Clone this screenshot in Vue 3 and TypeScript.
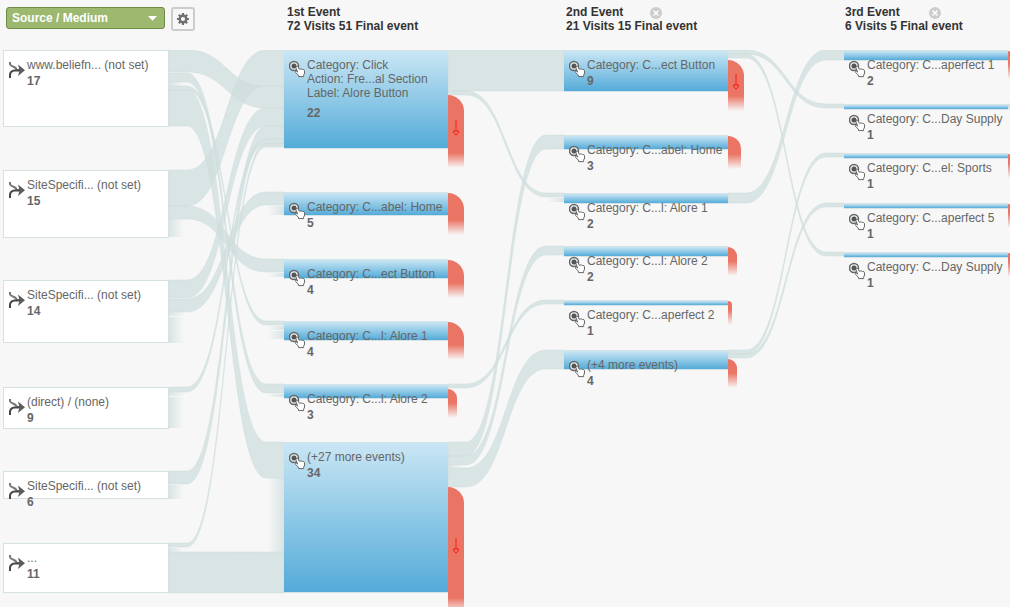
<script setup lang="ts">
import { ref } from 'vue'

interface FlowNode {
  y: number
  h: number
  lines: string[]
  visits: number
}
interface Stage {
  title: string
  summary: string
  closable: boolean
}
interface Exit {
  y: number
  h: number
  w: number
  arrow?: number
}

const PITCH = 280
const FIRST_X = 284
const NODE_W = 164
const LEAD = 18

const dimension = ref('Source / Medium')
const dimensions = ['Source / Medium', 'Landing Page', 'Country']

const stages: Stage[] = [
  { title: '1st Event', summary: '72 Visits 51 Final event', closable: false },
  { title: '2nd Event', summary: '21 Visits 15 Final event', closable: true },
  { title: '3rd Event', summary: '6 Visits 5 Final event', closable: true },
]

const sources: FlowNode[] = [
  { y: 0, h: 77, lines: ['www.beliefn... (not set)'], visits: 17 },
  { y: 120, h: 68, lines: ['SiteSpecifi... (not set)'], visits: 15 },
  { y: 230, h: 63, lines: ['SiteSpecifi... (not set)'], visits: 14 },
  { y: 337, h: 42, lines: ['(direct) / (none)'], visits: 9 },
  { y: 421, h: 28, lines: ['SiteSpecifi... (not set)'], visits: 6 },
  { y: 493, h: 50, lines: ['...'], visits: 11 },
]

const events: FlowNode[][] = [
  [
    { y: 0, h: 99, lines: ['Category: Click', 'Action: Fre...al Section', 'Label: Alore Button'], visits: 22 },
    { y: 142, h: 24, lines: ['Category: C...abel: Home'], visits: 5 },
    { y: 209, h: 20, lines: ['Category: C...ect Button'], visits: 4 },
    { y: 271, h: 20, lines: ['Category: C...l: Alore 1'], visits: 4 },
    { y: 334, h: 15, lines: ['Category: C...l: Alore 2'], visits: 3 },
    { y: 392, h: 151, lines: ['(+27 more events)'], visits: 34 },
  ],
  [
    { y: 0, h: 42, lines: ['Category: C...ect Button'], visits: 9 },
    { y: 85, h: 15, lines: ['Category: C...abel: Home'], visits: 3 },
    { y: 143, h: 11, lines: ['Category: C...l: Alore 1'], visits: 2 },
    { y: 196, h: 11, lines: ['Category: C...l: Alore 2'], visits: 2 },
    { y: 250, h: 6, lines: ['Category: C...aperfect 2'], visits: 1 },
    { y: 300, h: 20, lines: ['(+4 more events)'], visits: 4 },
  ],
  [
    { y: 0, h: 11, lines: ['Category: C...aperfect 1'], visits: 2 },
    { y: 54, h: 6, lines: ['Category: C...Day Supply'], visits: 1 },
    { y: 103, h: 6, lines: ['Category: C...el: Sports'], visits: 1 },
    { y: 153, h: 6, lines: ['Category: C...aperfect 5'], visits: 1 },
    { y: 202, h: 6, lines: ['Category: C...Day Supply'], visits: 1 },
  ],
]

// Each link: [gap index, y at the left node, y at the right node, thickness]
const links: [number, number, number, number][] = [
  [0, 0, 36, 22],
  [0, 23, 334, 9],
  [0, 36, 271, 4],
  [0, 40, 392, 36],
  [0, 120, 0, 36],
  [0, 156, 209, 13],
  [0, 230, 58, 18],
  [0, 249, 142, 13],
  [0, 337, 89, 5],
  [0, 421, 76, 13],
  [0, 493, 93, 4],
  [0, 502, 502, 41],
  [1, 0, 0, 41],
  [1, 41, 143, 4],
  [1, 334, 250, 4],
  [1, 392, 85, 14],
  [1, 406, 196, 9],
  [1, 418, 300, 19],
  [2, 0, 54, 4],
  [2, 4, 202, 4],
  [2, 143, 0, 10],
  [2, 300, 103, 4],
  [2, 304, 153, 4],
]

// Each fade: [gap index, y, height]
const fadesOut: [number, number, number][] = [
  [0, 32, 4], [0, 169, 18], [0, 262, 4], [0, 267, 26], [0, 342, 4],
  [0, 347, 31], [0, 435, 14], [0, 498, 4], [1, 415, 3],
]
const fadesIn: [number, number, number][] = [
  [0, 156, 9], [0, 223, 4], [0, 276, 4], [0, 281, 8], [0, 344, 3],
  [0, 428, 74], [1, 148, 4],
]

const exits: Exit[][] = [
  [
    { y: 45, h: 73, w: 16, arrow: 25 },
    { y: 143, h: 42, w: 16 },
    { y: 210, h: 38, w: 16 },
    { y: 272, h: 38, w: 16 },
    { y: 339, h: 29, w: 9 },
    { y: 437, h: 126, w: 16, arrow: 51 },
  ],
  [
    { y: 10, h: 51, w: 16, arrow: 14 },
    { y: 86, h: 33, w: 13 },
    { y: 197, h: 29, w: 9 },
    { y: 251, h: 24, w: 4 },
    { y: 309, h: 29, w: 9 },
  ],
  [
    { y: 1, h: 28, w: 9 },
    { y: 104, h: 24, w: 4 },
    { y: 154, h: 24, w: 4 },
    { y: 203, h: 24, w: 4 },
  ],
]

const gapLeft = (gap: number) => (gap === 0 ? 169 : 168 + gap * PITCH)
const gapRight = (gap: number) => FIRST_X + gap * PITCH

function ribbon([gap, a, b, t]: [number, number, number, number]): string {
  const x0 = gapLeft(gap)
  const x1 = gapRight(gap)
  const c0 = x0 + LEAD
  const c1 = x1 - LEAD
  const m = (c0 + c1) / 2
  return (
    `M${x0} ${a}H${c0}C${m} ${a} ${m} ${b} ${c1} ${b}H${x1}` +
    `V${b + t}H${c1}C${m} ${b + t} ${m} ${a + t} ${c0} ${a + t}H${x0}Z`
  )
}

const px = (n: number) => `${n}px`
const eventStyle = (stage: number, n: FlowNode) => ({
  left: px(FIRST_X + stage * PITCH),
  top: px(n.y),
  width: px(NODE_W),
  height: px(n.h),
})
const sourceStyle = (n: FlowNode) => ({ top: px(n.y), height: px(n.h) })
const exitStyle = (stage: number, e: Exit) => ({
  left: px(FIRST_X + NODE_W + stage * PITCH),
  top: px(e.y),
  width: px(e.w),
  height: px(e.h),
  borderTopRightRadius: px(e.w),
  paddingTop: px(e.arrow ?? 0),
})
</script>

<template>
  <main class="flow">
    <header class="head">
      <div class="controls">
        <div class="picker">
          <select v-model="dimension" aria-label="Dimension">
            <option v-for="d in dimensions" :key="d">{{ d }}</option>
          </select>
          <svg class="caret" width="9" height="5" viewBox="0 0 9 5" aria-hidden="true">
            <path d="M0 0H9L4.500 4.700Z" fill="#fff" />
          </svg>
        </div>
        <button class="gear" type="button" aria-label="Settings">
          <svg width="14" height="14" viewBox="0 0 14 14" aria-hidden="true">
            <g stroke="#707070">
              <path
                stroke-width="2.200"
                d="M7 1V3.500M7 10.500V13M1 7H3.500M10.500 7H13M2.800 2.800L4.500 4.500M9.500 9.500L11.200 11.200M11.200 2.800L9.500 4.500M4.500 9.500L2.800 11.200"
              />
              <circle cx="7" cy="7" r="3.300" fill="none" stroke-width="2.400" />
            </g>
          </svg>
        </button>
      </div>
      <div v-for="s in stages" :key="s.title" class="stage">
        <div class="stage-text">
          <div>{{ s.title }}</div>
          <div>{{ s.summary }}</div>
        </div>
        <button v-if="s.closable" class="close" type="button" :aria-label="`Remove ${s.title}`">
          <svg width="12" height="12" viewBox="0 0 12 12" aria-hidden="true">
            <circle cx="6" cy="6" r="6" fill="#ccc" />
            <path d="M3.500 3.500L8.500 8.500M8.500 3.500L3.500 8.500" stroke="#fff" stroke-width="1.500" />
          </svg>
        </button>
      </div>
    </header>

    <section class="canvas">
      <svg class="links" width="100%" height="557" aria-hidden="true">
        <defs>
          <linearGradient id="fade-out">
            <stop offset="0" stop-color="#cfdddd" stop-opacity="0.75" />
            <stop offset="1" stop-color="#cfdddd" stop-opacity="0" />
          </linearGradient>
          <linearGradient id="fade-in">
            <stop offset="0" stop-color="#cfdddd" stop-opacity="0" />
            <stop offset="1" stop-color="#cfdddd" stop-opacity="0.75" />
          </linearGradient>
        </defs>
        <rect v-for="(f, i) in fadesOut" :key="`o${i}`" :x="gapLeft(f[0])" :y="f[1]" width="15" :height="f[2]" fill="url(#fade-out)" />
        <rect v-for="(f, i) in fadesIn" :key="`i${i}`" :x="gapRight(f[0]) - 17" :y="f[1]" width="17" :height="f[2]" fill="url(#fade-in)" />
        <path v-for="(l, i) in links" :key="i" class="ribbon" :d="ribbon(l)" />
        <rect x="1008" y="54" width="2" height="5" class="ribbon" />
      </svg>

      <article v-for="(n, i) in sources" :key="`s${i}`" class="node source" :style="sourceStyle(n)">
        <svg class="icon" width="17" height="18" viewBox="0 0 17 18" aria-hidden="true">
          <g fill="none" stroke-width="2">
            <path d="M1 1V3Q1.500 5 4 5.500Q7 6.500 8 9H13" stroke="#777" />
            <path d="M1 17V13.500Q1.500 10 5.500 9.500H13" stroke="#484848" />
          </g>
          <path d="M9 3.500L16 9.200L9 15L10.500 9.200Z" fill="#5c5c5c" />
        </svg>
        <div class="label">
          <div v-for="t in n.lines" :key="t">{{ t }}</div>
          <strong>{{ n.visits }}</strong>
        </div>
      </article>

      <template v-for="(stage, c) in events" :key="`c${c}`">
        <article v-for="(n, i) in stage" :key="`${c}-${i}`" class="node event" :style="eventStyle(c, n)">
          <svg class="icon" width="18" height="19" viewBox="0 0 18 19" aria-hidden="true">
            <circle cx="5" cy="6" r="4.500" fill="#e8f0f4" stroke="#666" stroke-width="1.500" />
            <circle cx="5" cy="6" r="2.500" fill="#555" />
            <path
              d="M7.500 6.500Q8.700 5.800 9.200 7L10.300 9.300Q11.200 8.500 12 9.200Q12.900 8.600 13.600 9.500Q15 9 15.400 10.500L15.600 13L14.600 15.300V16.600H9.600L9.200 15L6.600 12.400Q6.100 11 7.500 11.200L8.700 12.100L7 8Q6.700 7 7.500 6.500Z"
              fill="#fff" stroke="#666" stroke-width="1" stroke-linejoin="round"
            />
          </svg>
          <div class="label" :class="{ detailed: n.lines.length > 1 }">
            <div v-for="t in n.lines" :key="t">{{ t }}</div>
            <strong>{{ n.visits }}</strong>
          </div>
        </article>
        <div v-for="(e, i) in exits[c]" :key="`e${c}-${i}`" class="exit" :style="exitStyle(c, e)">
          <svg v-if="e.arrow" width="6" height="16" viewBox="0 0 6 16" aria-hidden="true">
            <path d="M2.500 0V11M3.500 0V11" stroke="#f4483a" stroke-width="1" fill="none" />
            <path d="M0.500 11H5.500L5.500 12.500L3 15.200L0.500 12.500Z" fill="#ea7565" stroke="#f5190c" stroke-width="1" />
          </svg>
        </div>
      </template>
    </section>
  </main>
</template>

<style>
body {
  background: #f7f7f7;
}
</style>

<style scoped>
.flow {
  font: 12px/14px "Liberation Sans", Arial, Helvetica, sans-serif;
  color: #666;
  background: #f7f7f7;
  overflow: hidden;
}
.head {
  display: grid;
  grid-template-columns: 287px 279px 279px minmax(160px, 1fr);
  height: 50px;
  box-sizing: border-box;
  padding-top: 5px;
}
.controls {
  display: flex;
  align-items: flex-start;
  gap: 6px;
  padding: 2px 0 0 6px;
}
.picker {
  position: relative;
}
select {
  display: block;
  appearance: none;
  width: 159px;
  height: 22px;
  box-sizing: border-box;
  margin: 0;
  padding: 0 20px 0 5px;
  border: 1px solid #6d8b45;
  border-radius: 3px;
  background: #9db86f;
  color: #fff;
  font: bold 12px/14px "Liberation Sans", Arial, Helvetica, sans-serif;
}
.caret {
  position: absolute;
  right: 8px;
  top: 9px;
  pointer-events: none;
}
button {
  padding: 0;
  margin: 0;
}
.gear {
  display: flex;
  align-items: center;
  justify-content: center;
  width: 24px;
  height: 24px;
  box-sizing: border-box;
  border: 2px solid #ccc;
  border-radius: 3px;
  background: #f7f7f7;
}
.stage {
  display: flex;
  align-items: flex-start;
  color: #333;
  font-weight: bold;
  white-space: nowrap;
}
.stage-text {
  width: 84px;
}
.close {
  display: block;
  width: 12px;
  height: 12px;
  margin-top: 2px;
  border: 0;
  background: none;
}
.close svg {
  display: block;
}
.canvas {
  position: relative;
  overflow: hidden;
}
.links {
  display: block;
}
.ribbon {
  fill: #cfdddd;
  fill-opacity: 0.75;
  stroke: #cfdddd;
  stroke-opacity: 0.5;
}
.node {
  position: absolute;
  display: flex;
  align-items: flex-start;
  box-sizing: border-box;
  padding-left: 5px;
  white-space: nowrap;
}
.source {
  left: 3px;
  width: 166px;
  border: 1px solid #d6e2e2;
  background: #fff;
}
.event {
  border: solid #d3e3e6;
  border-width: 1px 0;
  background: linear-gradient(#c9e6f4, #54abd9) padding-box;
}
.icon {
  flex: none;
  margin-top: 10px;
}
.event .icon {
  margin-top: 9px;
}
.label {
  margin-top: 7px;
}
.source .label {
  margin-left: 1px;
}
.label strong {
  display: block;
  margin-top: 2px;
}
.label.detailed strong {
  margin-top: 6px;
}
.exit {
  position: absolute;
  display: flex;
  justify-content: center;
  align-items: flex-start;
  box-sizing: border-box;
  background: linear-gradient(#ea7565 calc(100% - 15px), #ea756500);
}
</style>
